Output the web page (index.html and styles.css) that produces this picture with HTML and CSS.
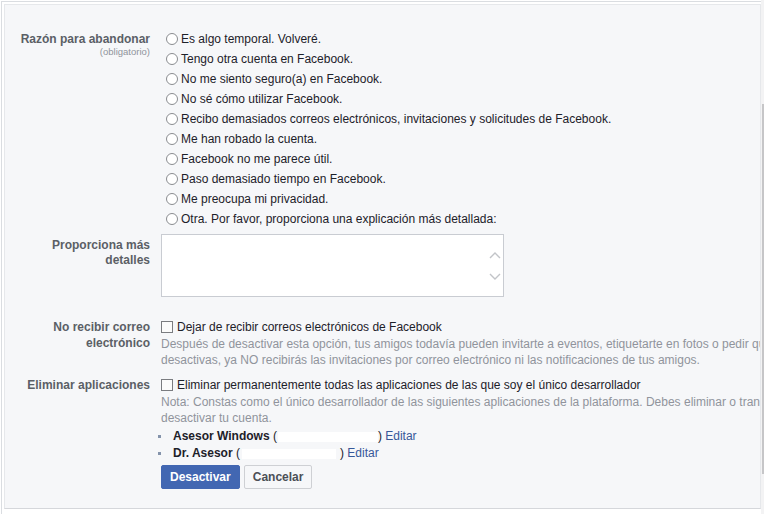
FILE: index.html
```html
<!DOCTYPE html>
<html lang="es">
<head>
<meta charset="utf-8">
<title>Desactivar cuenta</title>
<link rel="stylesheet" href="styles.css">
</head>
<body>
<div class="page">
  <div class="frame">
    <div class="panel">
      <div class="row row-reason">
        <div class="label">Razón para abandonar<span class="sub">(obligatorio)</span></div>
        <div class="radios">
          <div class="radio"><span class="circle"></span>Es algo temporal. Volveré.</div>
          <div class="radio"><span class="circle"></span>Tengo otra cuenta en Facebook.</div>
          <div class="radio"><span class="circle"></span>No me siento seguro(a) en Facebook.</div>
          <div class="radio"><span class="circle"></span>No sé cómo utilizar Facebook.</div>
          <div class="radio"><span class="circle"></span>Recibo demasiados correos electrónicos, invitaciones y solicitudes de Facebook.</div>
          <div class="radio"><span class="circle"></span>Me han robado la cuenta.</div>
          <div class="radio"><span class="circle"></span>Facebook no me parece útil.</div>
          <div class="radio"><span class="circle"></span>Paso demasiado tiempo en Facebook.</div>
          <div class="radio"><span class="circle"></span>Me preocupa mi privacidad.</div>
          <div class="radio"><span class="circle"></span>Otra. Por favor, proporciona una explicación más detallada:</div>
        </div>
      </div>

      <div class="row row-details">
        <div class="label">Proporciona más<br>detalles</div>
        <div class="textarea">
          <div class="ta-scroll">
            <svg class="chev" width="12" height="7" viewBox="0 0 12 7"><polyline points="1,6 6,1 11,6" fill="none" stroke="#c2c4c8" stroke-width="1.4"/></svg>
            <svg class="chev" width="12" height="7" viewBox="0 0 12 7"><polyline points="1,1 6,6 11,1" fill="none" stroke="#c2c4c8" stroke-width="1.4"/></svg>
          </div>
        </div>
      </div>

      <div class="row row-email">
        <div class="label">No recibir correo<br>electrónico</div>
        <div class="content">
          <div class="check-line"><span class="box"></span>Dejar de recibir correos electrónicos de Facebook</div>
          <div class="desc">Después de desactivar esta opción, tus amigos todavía pueden invitarte a eventos, etiquetarte en fotos o pedir que te unas a grupos. Si lo</div>
          <div class="desc">desactivas, ya NO recibirás las invitaciones por correo electrónico ni las notificaciones de tus amigos.</div>
        </div>
      </div>

      <div class="row row-apps">
        <div class="label">Eliminar aplicaciones</div>
        <div class="content">
          <div class="check-line"><span class="box"></span>Eliminar permanentemente todas las aplicaciones de las que soy el único desarrollador</div>
          <div class="desc">Nota: Constas como el único desarrollador de las siguientes aplicaciones de la plataforma. Debes eliminar o transferir estas aplicaciones antes de</div>
          <div class="desc">desactivar tu cuenta.</div>
          <ul class="apps">
            <li><span class="app"><span class="name">Asesor Windows</span> (<span class="redact redact-1"></span>) <a class="link" href="#">Editar</a></span></li>
            <li><span class="app"><span class="name">Dr. Asesor</span> (<span class="redact redact-2"></span>) <a class="link" href="#">Editar</a></span></li>
          </ul>
          <div class="buttons">
            <button class="btn btn-primary" type="button">Desactivar</button>
            <button class="btn btn-secondary" type="button">Cancelar</button>
          </div>
        </div>
      </div>
    </div>
  </div>
  <div class="track"><div class="thumb"></div></div>
</div>
</body>
</html>
```

FILE: styles.css
```css
* { box-sizing: border-box; }

html, body {
  margin: 0;
  padding: 0;
  background: #ffffff;
}

body {
  font-family: "Liberation Sans", Arial, sans-serif;
  font-size: 12px;
  color: #1d2129;
}

.page {
  display: flex;
  width: 764px;
  height: 514px;
  overflow: hidden;
}

.frame {
  flex: none;
  margin: 1px 0 0 1px;
  padding: 2px 0 0 2px;
  border-top: 1px solid #dadde1;
  border-left: 1px solid #dadde1;
}

.panel {
  width: 757px;
  height: 505px;
  border: 1px solid #e6e8eb;
  border-bottom-color: #d5d7db;
  background: #f6f7f9;
  overflow: hidden;
  padding: 24px 0 0 3px;
}

.row {
  display: grid;
  grid-template-columns: 142px minmax(0, 1fr);
  column-gap: 11px;
}

.label {
  text-align: right;
  font-weight: bold;
  color: #5b5f66;
}

.sub {
  display: block;
  font-size: 9.5px;
  line-height: 10px;
  margin-top: -2px;
  font-weight: normal;
  color: #90949c;
}

.row-reason .label { line-height: 20px; }

.radio {
  display: flex;
  align-items: center;
  height: 20px;
  line-height: 20px;
  padding-left: 5px;
  white-space: nowrap;
}

.circle {
  flex: none;
  width: 12px;
  height: 12px;
  border: 1px solid #8a8c90;
  border-radius: 50%;
  background: #ffffff;
  margin-right: 3px;
}

.row-details { margin-top: 5px; }

.row-details .label {
  line-height: 15px;
  padding-top: 4px;
}

.textarea {
  width: 343px;
  height: 63px;
  border: 1px solid #c9ccd2;
  background: #ffffff;
  display: flex;
  justify-content: flex-end;
}

.ta-scroll {
  width: 17px;
  display: flex;
  flex-direction: column;
  align-items: center;
  padding-top: 17px;
  gap: 14px;
}

.chev { display: block; }

.row-email { margin-top: 22px; }
.row-email .label { line-height: 16px; }

.row-apps { margin-top: 8.5px; }
.row-apps .label { line-height: 16.5px; }

.content { line-height: 16.5px; }

.check-line {
  display: flex;
  align-items: center;
  height: 16.5px;
  white-space: nowrap;
}

.box {
  flex: none;
  width: 12px;
  height: 12px;
  border: 1px solid #7a7c80;
  background: #fbfbfb;
  margin-right: 4px;
}

.desc {
  color: #90949c;
  white-space: nowrap;
}

.apps {
  list-style: none;
  margin: 1px 0 0;
  padding: 0;
  line-height: 17px;
}

.apps li {
  display: flex;
  align-items: center;
  white-space: nowrap;
}

.apps li::before {
  content: "";
  flex: none;
  width: 3px;
  height: 3px;
  background: #8493ab;
  margin-left: -3px;
  margin-right: 12px;
}

.name {
  font-weight: bold;
  color: #1d2129;
}

.redact {
  display: inline-block;
  height: 10px;
  background: #ffffff;
  vertical-align: -2px;
}

.redact-1 {
  width: 100px;
  margin-left: 1px;
}

.redact-2 {
  width: 94px;
  margin-left: 2px;
  margin-right: 4px;
}

.link {
  color: #365899;
  text-decoration: none;
}

.buttons {
  display: flex;
  gap: 4px;
  margin-top: 3.5px;
}

.btn {
  height: 24px;
  line-height: 22px;
  padding: 0 8px;
  border: 1px solid;
  border-radius: 2px;
  font-family: inherit;
  font-size: 12px;
  font-weight: bold;
  cursor: pointer;
}

.btn-primary {
  background: #4267b2;
  border-color: #4267b2;
  color: #ffffff;
}

.btn-secondary {
  background: #f6f7f9;
  border-color: #ced0d4;
  color: #4b4f56;
}

.track {
  flex: none;
  width: 3px;
  background: #f3f3f4;
}

.thumb {
  width: 2px;
  margin: 104px 0 0 1px;
  height: 370px;
  background: #c6c6c8;
}
```
